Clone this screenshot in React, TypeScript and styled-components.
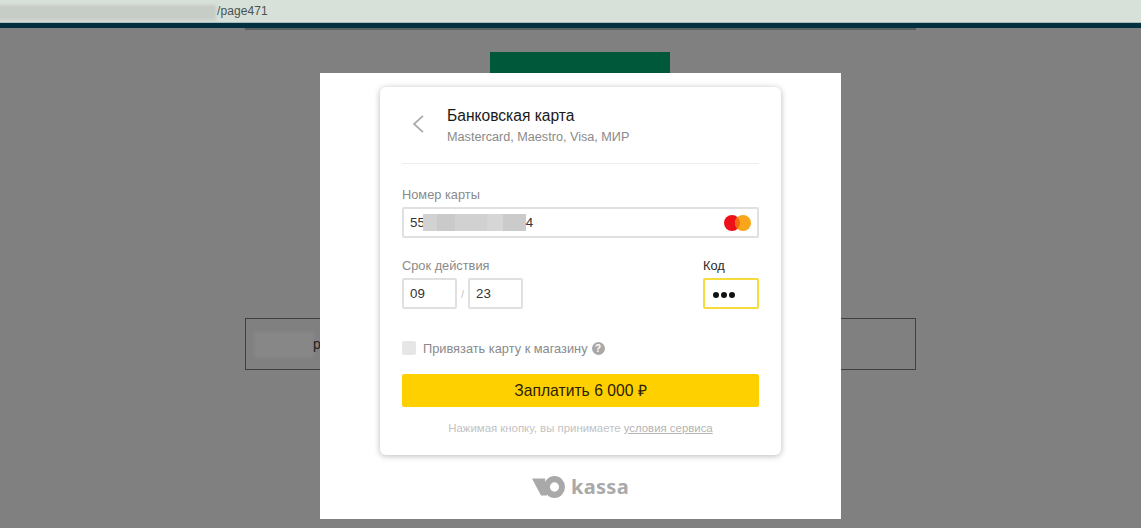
import React from 'react'
import styled, { createGlobalStyle } from 'styled-components'

const GlobalStyle = createGlobalStyle`
  html, body {
    margin: 0;
    padding: 0;
    height: 100%;
    overflow: hidden;
    background: #808080;
  }
  * {
    box-sizing: border-box;
  }
`

export default function App() {
  return (
    <Screen>
      <GlobalStyle />
      <UrlBar>
        <UrlMask />
        <UrlText>/page471</UrlText>
      </UrlBar>
      <Strip />
      <Page>
        <PageColumn>
          <TopLine />
          <GreenBlock />
          <OutlinedBox>
            <BoxMask />
            <BoxGlyph>р</BoxGlyph>
          </OutlinedBox>
        </PageColumn>
        <Overlay>
          <Modal>
            <Card>
              <CardHeader>
                <BackButton>
                  <svg width="12" height="18" viewBox="0 0 12 18" fill="none">
                    <path d="M11 .8 2 9l9 8.2" stroke="#a8a8a8" strokeWidth="1.7" />
                  </svg>
                </BackButton>
                <div>
                  <Title>Банковская карта</Title>
                  <Subtitle>Mastercard, Maestro, Visa, МИР</Subtitle>
                </div>
              </CardHeader>
              <Field>
                <Label>Номер карты</Label>
                <InputBox $wide>
                  <InputText>55</InputText>
                  <NumberMask />
                  <NumberEnd>4</NumberEnd>
                  <MastercardIcon width="27" height="16" viewBox="0 0 27 16">
                    <circle cx="8" cy="8" r="8" fill="#ee1018" />
                    <circle cx="19" cy="8" r="8" fill="#f9a51a" />
                    <path d="M13.5 2.2a8 8 0 0 1 0 11.6 8 8 0 0 1 0-11.6z" fill="#f46a12" />
                  </MastercardIcon>
                </InputBox>
              </Field>
              <ExpiryRow>
                <Field>
                  <Label>Срок действия</Label>
                  <DateRow>
                    <InputBox>
                      <InputText>09</InputText>
                    </InputBox>
                    <Slash>/</Slash>
                    <InputBox>
                      <InputText>23</InputText>
                    </InputBox>
                  </DateRow>
                </Field>
                <Field>
                  <Label $active>Код</Label>
                  <InputBox $focused>
                    <Dots>
                      <Dot />
                      <Dot />
                      <Dot />
                    </Dots>
                  </InputBox>
                </Field>
              </ExpiryRow>
              <SaveRow>
                <Checkbox />
                <SaveText>Привязать карту к магазину</SaveText>
                <HelpIcon>?</HelpIcon>
              </SaveRow>
              <PayButton>Заплатить 6 000 ₽</PayButton>
              <Terms>
                Нажимая кнопку, вы принимаете <TermsLink>условия сервиса</TermsLink>
              </Terms>
            </Card>
            <Logo>
              <svg width="33" height="22" viewBox="0 0 33 22">
                <path d="M0 2.5h13l2 17H9z" fill="#a9a9a9" />
                <path
                  fillRule="evenodd"
                  d="M22.5 0a10.5 11 0 1 1 0 22 10.5 11 0 0 1 0-22zm0 6.3a4.6 4.7 0 1 0 0 9.4 4.6 4.7 0 0 0 0-9.4z"
                  fill="#a9a9a9"
                />
              </svg>
              <LogoText>kassa</LogoText>
            </Logo>
          </Modal>
        </Overlay>
      </Page>
    </Screen>
  )
}

const Screen = styled.div`
  display: flex;
  flex-direction: column;
  width: 1141px;
  height: 528px;
  overflow: hidden;
  font-family: "Liberation Sans", Arial, sans-serif;
`

const UrlBar = styled.div`
  position: relative;
  flex: none;
  height: 23px;
  padding-left: 217px;
  background: #d7e0d9;
  border-bottom: 1px solid #a9bcc0;
`

const UrlMask = styled.div`
  position: absolute;
  top: 5px;
  left: -6px;
  width: 222px;
  height: 15px;
  background: #c6ccc6;
  filter: blur(1.5px);
`

const UrlText = styled.span`
  font-size: 12px;
  line-height: 23px;
  color: #4a524f;
  letter-spacing: 0.1px;
`

const Strip = styled.div`
  flex: none;
  height: 5px;
  background: #02303e;
`

const Page = styled.div`
  position: relative;
  flex: 1;
  padding-left: 20px;
  background: #808080;
`

const PageColumn = styled.div`
  display: flex;
  flex-direction: column;
  align-items: center;
  width: 671px;
  margin: 0 auto;
`

const TopLine = styled.div`
  align-self: stretch;
  height: 2px;
  background: #5a5f5f;
`

const GreenBlock = styled.div`
  width: 180px;
  height: 22px;
  margin: 22px 1px 0 0;
  background: #00583b;
`

const OutlinedBox = styled.div`
  position: relative;
  align-self: stretch;
  height: 52px;
  margin-top: 244px;
  border: 1px solid #3f3f3f;
`

const BoxMask = styled.div`
  position: absolute;
  top: 13px;
  left: 8px;
  width: 60px;
  height: 26px;
  background: #878787;
  filter: blur(1.5px);
`

const BoxGlyph = styled.span`
  position: absolute;
  top: 17px;
  left: 67px;
  font-size: 14px;
  color: #222;
`

const Overlay = styled.div`
  position: absolute;
  inset: 0;
  display: flex;
  justify-content: center;
  padding: 45px 0 0 20px;
`

const Modal = styled.div`
  display: flex;
  flex-direction: column;
  align-items: center;
  width: 521px;
  height: 446px;
  padding-top: 14px;
  background: #fff;
`

const Card = styled.div`
  display: flex;
  flex-direction: column;
  width: 401px;
  height: 368px;
  padding: 0 22px;
  background: #fff;
  border-radius: 6px;
  box-shadow: 0 1px 6px rgba(0, 0, 0, 0.28);
`

const CardHeader = styled.div`
  display: flex;
  align-items: flex-start;
  height: 77px;
  padding-top: 20px;
  border-bottom: 1px solid #eeeeee;
`

const BackButton = styled.div`
  display: flex;
  width: 45px;
  padding: 8px 0 0 10px;
`

const Title = styled.div`
  font-size: 15.6px;
  line-height: 18px;
  color: #1a1a1a;
`

const Subtitle = styled.div`
  margin-top: 4px;
  font-size: 12.65px;
  line-height: 16px;
  color: #8a8a8a;
`

const Field = styled.div`
  display: flex;
  flex-direction: column;
  margin-top: 23px;
`

const Label = styled.label<{ $active?: boolean }>`
  font-size: 12.8px;
  line-height: 16px;
  margin-bottom: 4px;
  color: ${({ $active }) => ($active ? '#2a2a2a' : '#8a8a8a')};
`

const InputBox = styled.div<{ $wide?: boolean; $focused?: boolean }>`
  display: flex;
  align-items: center;
  width: ${({ $wide, $focused }) => ($wide ? '357px' : $focused ? '56px' : '55px')};
  height: 31px;
  padding-left: 6px;
  border: 2px solid ${({ $focused }) => ($focused ? '#f5dc3c' : '#e0e0e0')};
  border-radius: 2px;
`

const InputText = styled.span`
  font-size: 13.3px;
  color: #333;
`

const NumberMask = styled.div`
  width: 103px;
  height: 17px;
  margin-left: -2px;
  background: linear-gradient(
    90deg,
    #d2d2d2 0 14%,
    #cacaca 14% 31%,
    #d1d1d1 31% 62%,
    #d6d6d6 62% 78%,
    #cbcbcb 78% 100%
  );
`

const NumberEnd = styled(InputText)`
  margin-right: auto;
`

const MastercardIcon = styled.svg`
  margin-right: 6px;
`

const ExpiryRow = styled.div`
  display: flex;
  justify-content: space-between;

  ${Field} {
    margin-top: 20px;
  }
`

const DateRow = styled.div`
  display: flex;
  align-items: center;
`

const Slash = styled.span`
  width: 11px;
  font-size: 11px;
  text-align: center;
  color: #c4c4c4;
`

const Dots = styled.div`
  display: flex;
  gap: 2px;
  margin: 2px 0 0 2px;
`

const Dot = styled.span`
  width: 6px;
  height: 6px;
  border-radius: 50%;
  background: #111;
`

const SaveRow = styled.div`
  display: flex;
  align-items: center;
  height: 14px;
  margin-top: 32px;
`

const Checkbox = styled.span`
  width: 14px;
  height: 14px;
  background: #e6e6e6;
  border-radius: 2px;
`

const SaveText = styled.span`
  margin-left: 7px;
  font-size: 12.8px;
  color: #8a8a8a;
`

const HelpIcon = styled.span`
  display: flex;
  align-items: center;
  justify-content: center;
  width: 13px;
  height: 13px;
  margin-left: 4px;
  border-radius: 50%;
  background: #a8a8a8;
  color: #fff;
  font-size: 10px;
  font-weight: bold;
`

const PayButton = styled.button`
  height: 33px;
  margin-top: 19px;
  padding: 0 0 2px;
  border: 0;
  border-radius: 2px;
  background: #ffd000;
  color: #2a2000;
  font-family: inherit;
  font-size: 15.7px;
`

const Terms = styled.div`
  margin-top: 14px;
  text-align: center;
  font-size: 11.4px;
  line-height: 14px;
  color: #c2c2c2;
`

const TermsLink = styled.span`
  color: #b4b4b4;
  text-decoration: underline;
`

const Logo = styled.div`
  display: flex;
  align-items: center;
  gap: 6px;
  margin-top: 21px;
`

const LogoText = styled.span`
  font-family: "Noto Sans", sans-serif;
  font-size: 20px;
  line-height: 22px;
  font-weight: 700;
  letter-spacing: 0.3px;
  color: #a9a9a9;
`
